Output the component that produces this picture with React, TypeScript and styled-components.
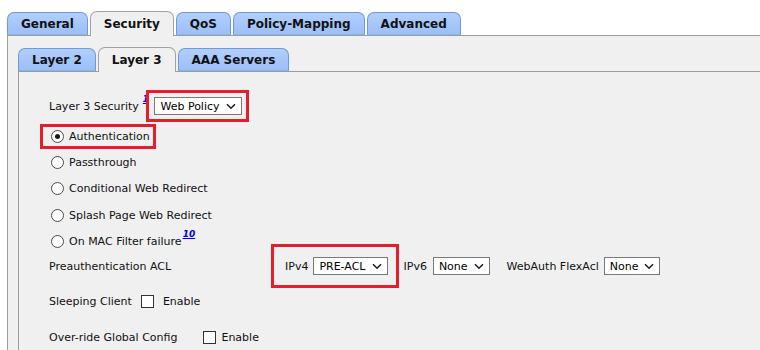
import React from "react";
import styled, { createGlobalStyle } from "styled-components";

const GlobalStyle = createGlobalStyle`
  html, body {
    margin: 0;
    padding: 0;
    background: #ffffff;
  }
  body {
    font-family: "DejaVu Sans", Verdana, sans-serif;
    font-size: 11px;
    color: #111;
  }
`;

const Page = styled.div`
  width: 760px;
  height: 350px;
  overflow: hidden;
  padding: 11px 0 0 7px;
  box-sizing: border-box;
`;

const TabRow = styled.div`
  display: flex;
  align-items: flex-end;
  gap: 2px;
  position: relative;
  z-index: 1;
`;

const Tab = styled.div<{ $active?: boolean }>`
  box-sizing: border-box;
  height: ${(p) => (p.$active ? "25px" : "23px")};
  margin-bottom: ${(p) => (p.$active ? "-1px" : "0")};
  padding: 0 13px;
  display: flex;
  align-items: center;
  font-size: 12px;
  font-weight: bold;
  color: #111;
  border: 1px solid ${(p) => (p.$active ? "#a3a3a3" : "#6f9ad8")};
  border-bottom: ${(p) => (p.$active ? "none" : "1px solid #8fb2ea")};
  border-radius: 7px 7px 0 0;
  background: ${(p) =>
    p.$active ? "#f0f0f0" : "linear-gradient(#b2cffc, #9bbff8)"};
`;

const Panel = styled.div<{ $pad: string }>`
  border-top: 1px solid #9c9c9c;
  border-left: 1px solid #9c9c9c;
  background: #f0f0f0;
  padding: ${(p) => p.$pad};
  box-sizing: border-box;
`;

const Form = styled.div`
  display: flex;
  flex-direction: column;
  padding: 21px 0 0 30px;
  height: 300px;
`;

const Row = styled.div<{ $space?: number }>`
  display: flex;
  align-items: center;
  min-height: 26px;
  margin-top: ${(p) => p.$space ?? 0}px;
  white-space: nowrap;
`;

const Label = styled.span<{ $width?: number; $gap?: number; $ml?: number }>`
  display: inline-block;
  width: ${(p) => (p.$width ? `${p.$width}px` : "auto")};
  margin-right: ${(p) => p.$gap ?? 0}px;
  margin-left: ${(p) => p.$ml ?? 0}px;
`;

const Sup = styled.a`
  align-self: flex-start;
  margin: 2px 0 0 4px;
  font-size: 8px;
  font-weight: bold;
  font-style: italic;
  color: #0000ee;
  text-decoration: underline;
`;

const SupAfter = styled(Sup)`
  margin: 1px 0 0 1px;
  font-size: 9px;
`;

const Marked = styled.div<{ $t: number; $r: number; $b: number; $l: number; $ml?: number }>`
  position: relative;
  display: inline-flex;
  align-items: center;
  margin-left: ${(p) => p.$ml ?? 0}px;
  &::after {
    content: "";
    position: absolute;
    top: ${(p) => -p.$t}px;
    right: ${(p) => -p.$r}px;
    bottom: ${(p) => -p.$b}px;
    left: ${(p) => -p.$l}px;
    border: 3px solid #e41f2b;
    pointer-events: none;
  }
`;

const SelectBox = styled.div<{ $ml?: number }>`
  box-sizing: border-box;
  display: inline-flex;
  align-items: center;
  gap: 6px;
  height: 18px;
  margin-left: ${(p) => p.$ml ?? 0}px;
  padding: 0 5px;
  border: 1px solid #7a7a7a;
  background: #fff;
  color: #000;
  font-size: 11px;
`;

const Radio = styled.span<{ $checked?: boolean }>`
  box-sizing: border-box;
  width: 13px;
  height: 13px;
  margin: 0 5px 0 2px;
  border-radius: 50%;
  border: 1px solid #4a4a4a;
  background: #fff;
  display: inline-flex;
  align-items: center;
  justify-content: center;
  &::after {
    content: "";
    width: 5px;
    height: 5px;
    border-radius: 50%;
    background: ${(p) => (p.$checked ? "#1a1a1a" : "transparent")};
  }
`;

const Check = styled.span<{ $gap?: number }>`
  box-sizing: border-box;
  display: inline-block;
  width: 13px;
  height: 13px;
  border: 1px solid #333;
  background: #fff;
  margin-right: ${(p) => p.$gap ?? 9}px;
`;

const Chevron = () => (
  <svg width="10" height="7" viewBox="0 0 10 7">
    <path d="M1 1.2 L5 5.2 L9 1.2" fill="none" stroke="#222" strokeWidth="1.6" />
  </svg>
);

const Select = ({ value, ml }: { value: string; ml?: number }) => (
  <SelectBox $ml={ml}>
    <span>{value}</span>
    <Chevron />
  </SelectBox>
);

const RadioRow = ({
  text,
  space,
  children,
}: {
  text: string;
  space?: number;
  children?: React.ReactNode;
}) => (
  <Row $space={space}>
    <Radio />
    <span>{text}</span>
    {children}
  </Row>
);

const App = () => {
  const topTabs = ["General", "Security", "QoS", "Policy-Mapping", "Advanced"];
  const subTabs = ["Layer 2", "Layer 3", "AAA Servers"];

  return (
    <>
      <GlobalStyle />
      <Page>
        <TabRow>
          {topTabs.map((t) => (
            <Tab key={t} $active={t === "Security"}>
              {t}
            </Tab>
          ))}
        </TabRow>
        <Panel $pad="11px 0 0 10px">
          <TabRow>
            {subTabs.map((t) => (
              <Tab key={t} $active={t === "Layer 3"}>
                {t}
              </Tab>
            ))}
          </TabRow>
          <Panel $pad="0">
            <Form>
              <Row>
                <span>Layer 3 Security</span>
                <Sup>1</Sup>
                <Marked $t={7} $r={7} $b={7} $l={8} $ml={6}>
                  <Select value="Web Policy" />
                </Marked>
              </Row>
              <Row $space={4}>
                <Marked $t={6} $r={6} $b={6} $l={9}>
                  <Radio $checked />
                  <span>Authentication</span>
                </Marked>
              </Row>
              <RadioRow text="Passthrough" />
              <RadioRow text="Conditional Web Redirect" />
              <RadioRow text="Splash Page Web Redirect" space={1} />
              <RadioRow text="On MAC Filter failure">
                <SupAfter>10</SupAfter>
              </RadioRow>
              <Row $space={-1}>
                <Label $width={236}>Preauthentication ACL</Label>
                <Marked $t={13} $r={11} $b={13} $l={14}>
                  <span>IPv4</span>
                  <Select value="PRE-ACL" ml={5} />
                </Marked>
                <Label $ml={16}>IPv6</Label>
                <Select value="None" ml={6} />
                <Label $ml={17}>WebAuth FlexAcl</Label>
                <Select value="None" ml={5} />
              </Row>
              <Row $space={9}>
                <Label $gap={9}>Sleeping Client</Label>
                <Check />
                <span>Enable</span>
              </Row>
              <Row $space={10}>
                <Label $gap={26}>Over-ride Global Config</Label>
                <Check $gap={5} />
                <span>Enable</span>
              </Row>
            </Form>
          </Panel>
        </Panel>
      </Page>
    </>
  );
};

export default App;
